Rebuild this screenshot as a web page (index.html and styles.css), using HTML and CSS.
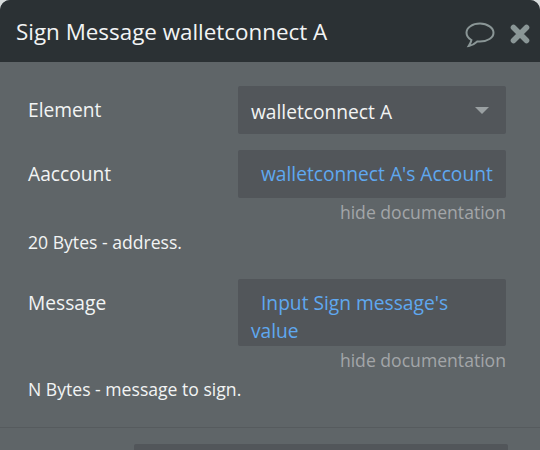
FILE: index.html
```html
<!DOCTYPE html>
<html lang="en">
<head>
<meta charset="utf-8">
<title>Sign Message walletconnect A</title>
<link rel="stylesheet" href="styles.css">
</head>
<body>
<div class="panel">
  <header class="head">
    <div class="title">Sign Message walletconnect A</div>
    <svg class="icon-comment" viewBox="0 0 30 26" width="30" height="26" aria-hidden="true">
      <path d="M15 1.600C7.400 1.600 1.500 5.600 1.500 10.800c0 3 1.900 5.500 4.900 7.200-.3 2-1.300 4-2.600 5.900 3.200-.5 6.300-2.500 8.500-4.500.9.1 1.800.2 2.700.2 7.600 0 13.500-3.900 13.500-8.800S22.600 1.600 15 1.600z" fill="none" stroke="#8a9696" stroke-width="2"/>
    </svg>
    <svg class="icon-close" viewBox="0 0 20 20" width="20" height="20" aria-hidden="true">
      <path d="M3.500 3.500L16.500 16.500M16.500 3.500L3.500 16.500" fill="none" stroke="#8a9696" stroke-width="5.600" stroke-linecap="round"/>
    </svg>
  </header>
  <main class="body">
    <div class="row">
      <div class="label">Element</div>
      <div class="field select">
        <span>walletconnect A</span>
        <span class="caret"></span>
      </div>
    </div>
    <div class="row row-account">
      <div class="label">Aaccount</div>
      <div class="field dyn"><span class="indent">walletconnect A's Account</span></div>
    </div>
    <div class="hide">hide documentation</div>
    <div class="doc doc-first">20 Bytes - address.</div>
    <div class="row row-message">
      <div class="label">Message</div>
      <div class="field dyn multi"><span class="indent">Input Sign message's</span> value</div>
    </div>
    <div class="hide">hide documentation</div>
    <div class="doc doc-second">N Bytes - message to sign.</div>
    <div class="divider"></div>
    <div class="next"></div>
  </main>
</div>
</body>
</html>
```
FILE: styles.css
```css
* { box-sizing: border-box; }
html, body { margin: 0; height: 100%; overflow: hidden; background: #d8dcdc; }
body { font-family: "Open Sans", sans-serif; }
.panel { width: 540px; height: 450px; display: flex; flex-direction: column; background: #5f6568; border-radius: 10px 10px 0 0; overflow: hidden; }
.head { height: 62px; flex: none; display: flex; align-items: center; padding: 0 10px 0 16px; background: #2b3134; color: #f2f4f4; }
.title { font-size: 22.4px; flex: 1; white-space: nowrap; }
.icon-comment { margin-right: 15px; margin-top: 7px; }
.icon-close { margin-top: 5px; }
.body { flex: 1; display: flex; flex-direction: column; padding-top: 24px; position: relative; }
.row { display: flex; padding: 0 34px 0 28px; }
.row-account { margin-top: 16px; }
.row-message { margin-top: 26px; }
.label { width: 210px; flex: none; font-size: 19.2px; line-height: 48px; color: #f2f4f4; }
.field { width: 268px; min-height: 48px; background: #52565a; border-radius: 2px; font-size: 19.2px; line-height: 28px; padding: 10px 13px; color: #f2f4f4; }
.select { display: flex; align-items: center; justify-content: space-between; padding: 12px 17px 8px 13px; }
.caret { width: 0; height: 0; margin-top: -4px; border-left: 7px solid transparent; border-right: 7px solid transparent; border-top: 7px solid #9aa0a2; }
.dyn { color: #5fa8f0; white-space: nowrap; }
.multi { white-space: normal; height: 67px; padding-top: 10px; }
.indent { margin-left: 10px; }
.hide { font-size: 17.6px; line-height: 22px; color: #a3a6a8; text-align: right; padding-right: 34px; margin-top: 3px; }
.doc { font-size: 17.6px; line-height: 22px; color: #f2f4f4; padding-left: 28px; }
.doc-first { margin-top: 8px; }
.doc-second { margin-top: 7px; }
.divider { height: 1px; background: #565b5e; margin-top: 27px; }
.next { width: 374px; height: 30px; margin: 16px 0 0 134px; background: #52565a; border-radius: 2px 2px 0 0; }
```
